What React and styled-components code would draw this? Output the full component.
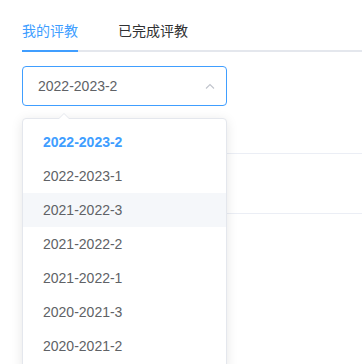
import React from 'react';
import styled, { createGlobalStyle } from 'styled-components';

const GlobalStyle = createGlobalStyle`
  body {
    margin: 0;
    background: #fff;
    font-family: "Liberation Sans", Arial, "Noto Sans CJK SC", sans-serif;
  }
`;

const Page = styled.div`
  padding: 11px 0 0 22px;
  width: 340px;
  height: 353px;
  overflow: hidden;
`;

const TabBar = styled.div`
  display: flex;
  height: 39px;
  border-bottom: 2px solid #e4e7ed;
`;

const Tab = styled.div`
  position: relative;
  height: 39px;
  line-height: 40px;
  font-size: 14px;
  padding: ${p => (p.first ? '0 20px 0 0' : '0 20px')};
  color: ${p => (p.active ? '#409eff' : '#303133')};
  &::after {
    content: '';
    display: ${p => (p.active ? 'block' : 'none')};
    position: absolute;
    left: 0;
    right: 20px;
    bottom: -2px;
    height: 2px;
    background: #409eff;
  }
`;

const SelectWrap = styled.div`
  position: relative;
  width: 205px;
  margin-top: 14px;
`;

const SelectBox = styled.div`
  box-sizing: border-box;
  height: 40px;
  border: 1px solid #409eff;
  border-radius: 4px;
  display: flex;
  align-items: center;
  justify-content: space-between;
  padding: 0 11px 0 15px;
  font-size: 14px;
  color: #606266;
`;

const Dropdown = styled.div`
  position: absolute;
  top: 52px;
  left: 0;
  width: 205px;
  box-sizing: border-box;
  border: 1px solid #e4e7ed;
  border-radius: 4px;
  background: #fff;
  box-shadow: 0 2px 12px 0 rgba(0, 0, 0, 0.1);
  padding: 6px 0;
  z-index: 10;
  &::before {
    content: '';
    position: absolute;
    top: -6px;
    left: 35px;
    border: 6px solid transparent;
    border-top-width: 0;
    border-bottom-color: #e4e7ed;
  }
  &::after {
    content: '';
    position: absolute;
    top: -5px;
    left: 35px;
    border: 6px solid transparent;
    border-top-width: 0;
    border-bottom-color: #fff;
  }
`;

const Option = styled.div`
  height: 34px;
  line-height: 34px;
  padding: 0 20px;
  font-size: 14px;
  color: ${p => (p.selected ? '#409eff' : '#606266')};
  font-weight: ${p => (p.selected ? 700 : 400)};
  background: ${p => (p.hover ? '#f5f7fa' : 'transparent')};
`;

const Table = styled.div`
  margin-top: 47px;
  border-top: 1px solid #ebeef5;
`;

const Row = styled.div`
  height: 59px;
  border-bottom: 1px solid #ebeef5;
`;

const terms = [
  '2022-2023-2',
  '2022-2023-1',
  '2021-2022-3',
  '2021-2022-2',
  '2021-2022-1',
  '2020-2021-3',
  '2020-2021-2',
];

const Chevron = () => (
  <svg width="10" height="6" viewBox="0 0 10 6" fill="none">
    <path d="M1 5.5 L5 1.5 L9 5.5" stroke="#c0c4cc" strokeWidth="1.1" />
  </svg>
);

export default function App() {
  return (
    <Page>
      <GlobalStyle />
      <TabBar>
        <Tab first active>我的评教</Tab>
        <Tab>已完成评教</Tab>
      </TabBar>
      <SelectWrap>
        <SelectBox>
          <span>2022-2023-2</span>
          <Chevron />
        </SelectBox>
        <Dropdown>
          {terms.map((t, i) => (
            <Option key={t} selected={i === 0} hover={i === 2}>
              {t}
            </Option>
          ))}
        </Dropdown>
      </SelectWrap>
      <Table>
        <Row />
      </Table>
    </Page>
  );
}
